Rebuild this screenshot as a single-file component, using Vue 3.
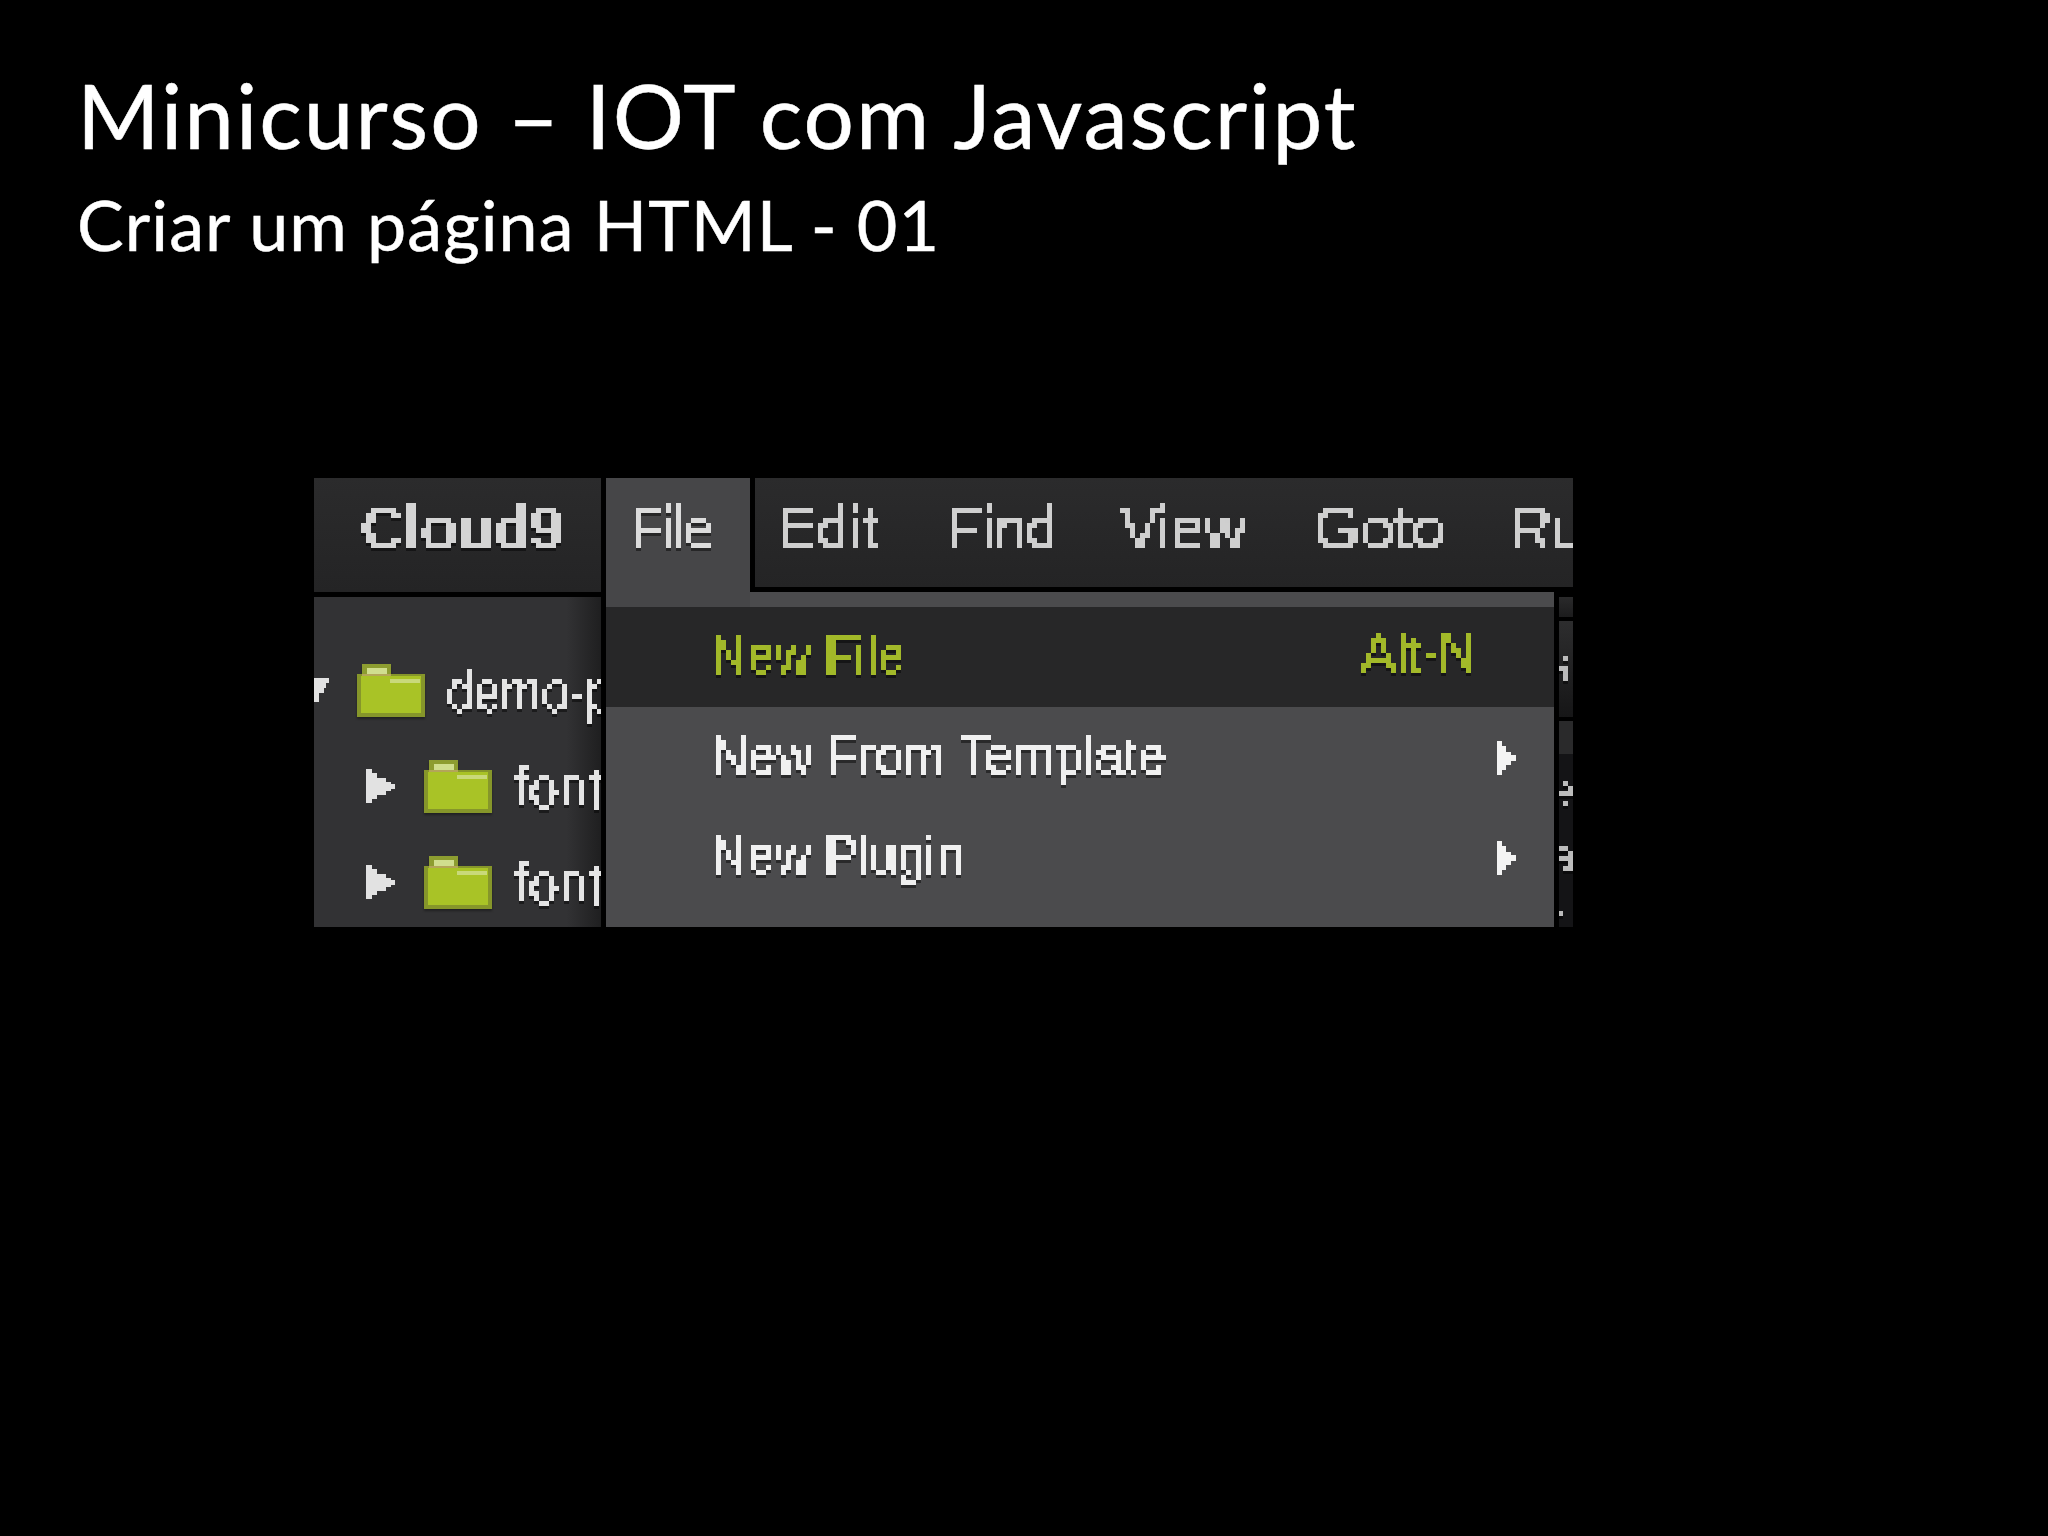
<script setup>
const menuItems = [
  { label: 'Edit', sx: 0.95, w: 99 },
  { label: 'Find', sx: 0.93, w: 103 },
  { label: 'View', sx: 0.96, w: 123 },
  { label: 'Goto', sx: 1, w: 127 },
  { label: 'Run', sx: 0.95, w: 120 },
]
const rows = [
  { label: 'demo-project', open: true, sx: 0.84 },
  { label: 'fonts', open: false, sx: 0.92 },
  { label: 'fonts', open: false, sx: 0.92 },
]
const entries = [
  { label: 'New File', shortcut: 'Alt-N', active: true, sx: 0.96 },
  { label: 'New From Template', arrow: true, sx: 0.98 },
  { label: 'New Plugin', arrow: true, sx: 0.96 },
]
</script>

<template>
  <main class="slide">
    <header class="head">
      <h1 class="title">Minicurso – IOT com Javascript</h1>
      <h2 class="sub">Criar um página HTML - 01</h2>
    </header>

    <svg class="defs" width="0" height="0" aria-hidden="true">
      <filter id="pix" x="0" y="0" width="100%" height="100%" color-interpolation-filters="sRGB">
        <feFlood x="2" y="2" width="1" height="1" flood-color="#000" />
        <feComposite width="5" height="5" />
        <feTile result="grid" />
        <feComposite in="SourceGraphic" in2="grid" operator="in" />
        <feMorphology operator="dilate" radius="2" />
        <feComponentTransfer>
          <feFuncA type="discrete" tableValues="0 0 1 1" />
        </feComponentTransfer>
        <feGaussianBlur stdDeviation="0.6" />
      </filter>
    </svg>

    <section class="shot">
      <aside class="side">
        <div class="brand"><span class="px"><b class="txt brand-t">Cloud9</b></span></div>
        <ul class="tree">
          <li v-for="(r, i) in rows" :key="i" class="row" :class="{ open: r.open }">
            <svg v-if="r.open" class="tw tw-down" viewBox="0 0 15 24"><path d="M0 0H15V5H12V10H10V15H5V24H0Z" fill="#e2e2e2" /></svg>
            <svg v-else class="tw" viewBox="0 0 29 34"><path d="M0 0H6V4H11V9H20V13H25V15H29V20H25V22H20V26H11V30H6V34H0Z" fill="#e2e2e2" /></svg>
            <svg class="folder" viewBox="0 0 68 53">
              <path d="M5 0H34V10H5Z" fill="#8d9d30" />
              <path d="M10 4H30V10H10Z" fill="#d0de8e" />
              <path d="M0 10H68V53H0Z" fill="#86962a" />
              <path d="M5 10H34V12H5Z" fill="#b3a658" />
              <path d="M4 12H64V49H4Z" fill="#a9c326" />
              <path d="M33 15H63V19H33Z" fill="#c9d97a" />
            </svg>
            <span class="px name"><span class="txt" :style="{ transform: `scaleX(${r.sx})` }">{{ r.label }}</span></span>
          </li>
        </ul>
      </aside>

      <div class="main">
        <nav class="bar">
          <div class="tab"><span class="px"><span class="txt file-t">File</span></span></div>
          <div class="items">
            <span v-for="m in menuItems" :key="m.label" class="item" :style="{ width: m.w + 'px' }">
              <span class="txt" :style="{ transform: `scaleX(${m.sx})` }">{{ m.label }}</span>
            </span>
          </div>
        </nav>
        <div class="gutter">
          <div class="g g1"></div>
          <div class="g g2"><span class="px"><span class="frag">s</span></span></div>
          <div class="g g3"></div>
          <div class="g g4">
            <span class="px">
              <span class="frag">e</span>
              <span class="frag">a</span>
              <span class="frag">r</span>
            </span>
          </div>
        </div>
      </div>

      <div class="menu">
        <div v-for="e in entries" :key="e.label" class="entry" :class="{ active: e.active }">
          <span class="px label"><span class="txt" :style="{ transform: `scaleX(${e.sx})` }">{{ e.label }}</span></span>
          <span v-if="e.shortcut" class="px key"><span class="txt">{{ e.shortcut }}</span></span>
          <svg v-if="e.arrow" class="sub-arrow" viewBox="0 0 19 34"><path d="M0 0H5V5H9V11H14V14H19V20H14V24H9V29H5V34H0Z" fill="#f4f4f4" /></svg>
        </div>
      </div>
    </section>
  </main>
</template>

<style>
html, body { margin: 0; background: #000; }
</style>

<style scoped>
.slide { width: 2048px; height: 1536px; background: #000; overflow: hidden; box-sizing: border-box; padding: 60px 0 0 77px; }
.head { color: #fff; font-family: Lato, "Open Sans", sans-serif; font-weight: 400; -webkit-text-stroke: .5px #fff; }
.title { margin: 0; font: inherit; font-size: 89px; line-height: 110px; letter-spacing: 2px; white-space: nowrap; }
.sub { margin: 9px 0 0; font: inherit; font-size: 70px; line-height: 90px; letter-spacing: 1.1px; white-space: nowrap; }
.defs { position: absolute; }
.shot { position: relative; width: 1259px; height: 449px; margin: 209px 0 0 237px; display: grid; grid-template-columns: 287px 1fr; column-gap: 5px; overflow: hidden; background: #000; }
.px { display: block; filter: url(#pix) drop-shadow(0 3px 0 rgba(0, 0, 0, .45)); padding: 10px 40px 20px 0; }
.txt { display: inline-block; font-family: "Liberation Sans", Arial, sans-serif; transform-origin: left center; white-space: nowrap; -webkit-text-stroke: .6px currentColor; }
.side { display: flex; flex-direction: column; gap: 5px; min-width: 0; }
.brand { height: 114px; box-sizing: border-box; background: linear-gradient(#2b2b2c, #242425); padding: 5px 0 0 47px; color: #d4d4d4; overflow: hidden; }
.brand-t { font-size: 62px; line-height: 70px; font-weight: 700; transform: scaleX(.96); }
.tree { flex: 1; margin: 0; list-style: none; padding: 67px 0 0; background: linear-gradient(90deg, #323234 88%, #1f1f20 100%); overflow: hidden; display: flex; flex-direction: column; gap: 43px; }
.row { display: flex; align-items: center; height: 53px; padding-left: 52px; position: relative; }
.row.open { padding-left: 43px; }
.tw { position: absolute; left: 52px; top: 9px; width: 29px; height: 34px; }
.tw-down { left: 0; top: 14px; width: 15px; height: 24px; }
.folder { width: 68px; height: 53px; margin-left: 58px; flex: none; filter: drop-shadow(0 2px 1px rgba(0,0,0,.35)) blur(.6px); }
.row.open .folder { margin-left: 0; }
.name { margin-left: 22px; color: #e4e4e4; font-size: 58px; line-height: 70px; padding: 2px 40px 0 0; }
.main { display: flex; flex-direction: column; min-width: 0; }
.bar { height: 114px; display: flex; }
.tab { width: 144px; height: 129px; flex: none; box-sizing: border-box; background: #464648; color: #dcdcdc; padding: 5px 0 0 25px; z-index: 2; }
.file-t { font-size: 61px; line-height: 70px; transform: scaleX(.84); }
.items { flex: 1; box-sizing: border-box; background: linear-gradient(#2b2b2c, #242425); border-left: 5px solid #000; border-bottom: 5px solid #000; display: flex; gap: 70px; color: #cfcfcf; padding: 15px 0 0 23px; overflow: hidden; font-size: 61px; line-height: 70px; min-width: 0; }
.item { display: block; filter: url(#pix); padding: 0 20px 20px 0; box-sizing: content-box; margin-right: -20px; flex: none; }
.gutter { margin-top: 5px; flex: 1; display: flex; flex-direction: column; align-items: flex-end; gap: 4px; }
.g { width: 15px; overflow: hidden; color: #bcbcbc; flex: none; }
.g1 { height: 20px; background: linear-gradient(#2a2a2b, #1c1c1d); }
.g2 { height: 96px; background: linear-gradient(#2d2d2e, #161617); padding-top: 10px; box-sizing: border-box; }
.g3 { height: 33px; background: #2a2a2b; }
.g4 { flex: 1; margin-top: -4px; background: linear-gradient(#141416 90%, #000); padding-top: 2px; }
.frag { font-family: "Liberation Sans", sans-serif; font-size: 52px; line-height: 66px; margin-left: -12px; display: block; }
.g .px { padding: 0 0 20px; }
.menu { position: absolute; left: 292px; top: 114px; width: 953px; height: 335px; box-sizing: border-box; padding-top: 15px; background: #4b4b4d; border-right: 5px solid #000; z-index: 1; }
.entry { height: 100px; display: flex; align-items: center; padding-left: 105px; position: relative; color: #f0f0f0; }
.entry.active { background: #272728; color: #a3b92a; }
.label { font-size: 52px; line-height: 60px; padding: 0 40px 20px 0; margin-bottom: -20px; margin-top: -3px; }
.key { position: absolute; left: 755px; top: 16px; font-size: 52px; line-height: 60px; padding: 0 40px 20px 0; }
.sub-arrow { position: absolute; left: 891px; top: 34px; width: 19px; height: 34px; }
</style>
